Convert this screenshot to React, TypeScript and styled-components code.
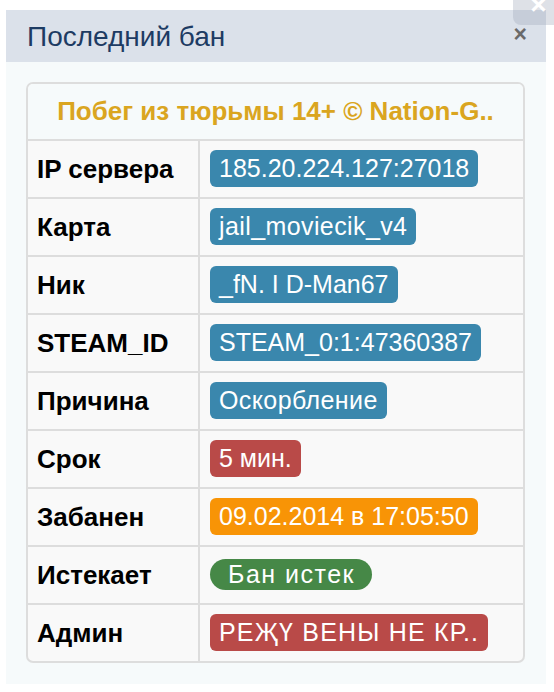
import React from "react";
import styled, { createGlobalStyle } from "styled-components";

const Global = createGlobalStyle`
  html, body { margin: 0; padding: 0; background: #ffffff; }
  body { font-family: "Liberation Sans", Arial, Helvetica, sans-serif; }
`;

const Page = styled.div`
  position: relative;
  width: 554px;
  height: 692px;
  padding: 10px 0 0 6px;
  box-sizing: border-box;
  overflow: hidden;
`;

const Modal = styled.div`
  width: 540px;
  height: 674px;
  display: flex;
  flex-direction: column;
  background: #f6fafb;
`;

const Header = styled.div`
  height: 52px;
  flex: none;
  display: flex;
  align-items: center;
  justify-content: space-between;
  padding: 0 19px 0 21px;
  background: #dbe1ea;
  box-sizing: border-box;
`;

const Title = styled.h3`
  margin: 0;
  font-size: 28px;
  font-weight: normal;
  color: #1d3b63;
  margin-top: 1px;
`;

const CloseX = styled.span`
  font-size: 23px;
  font-weight: bold;
  color: #6a6a6a;
  line-height: 1;
  margin-top: -3px;
`;

const OuterClose = styled.div`
  position: absolute;
  top: -12px;
  right: -10px;
  width: 51px;
  height: 37px;
  border-radius: 8px;
  background: rgba(160, 170, 185, 0.35);
  display: flex;
  align-items: flex-end;
  justify-content: center;
  padding-bottom: 6px;
  box-sizing: border-box;
  color: #ffffff;
  font-size: 28px;
  font-weight: bold;
  line-height: 1;
`;

const Body = styled.div`
  padding: 20px 21px 0 20px;
`;

const Card = styled.div`
  border: 2px solid #dddddd;
  border-radius: 7px;
  overflow: hidden;
  background: #f9f9f9;
`;

const CardTitle = styled.div`
  height: 55px;
  display: flex;
  align-items: center;
  justify-content: center;
  background: #f6fafb;
  color: #daa520;
  font-weight: bold;
  font-size: 26px;
  white-space: nowrap;
`;

const Row = styled.div`
  display: grid;
  grid-template-columns: 172px 1fr;
  height: 58px;
  border-top: 2px solid #dddddd;
  box-sizing: border-box;
`;

const Label = styled.div`
  display: flex;
  align-items: center;
  padding-left: 9px;
  border-right: 2px solid #dddddd;
  font-weight: bold;
  font-size: 26px;
  color: #000000;
  white-space: nowrap;
`;

const Value = styled.div`
  display: flex;
  align-items: center;
  padding-left: 10px;
  padding-bottom: 2px;
`;

const Badge = styled.span<{ $bg: string; $pill?: boolean; $track?: number }>`
  display: inline-flex;
  align-items: center;
  height: ${(p) => (p.$pill ? "31px" : "37px")};
  padding: ${(p) => (p.$pill ? "0 17px 0 18px" : "0 9px")};
  border-radius: ${(p) => (p.$pill ? "16px" : "6px")};
  background: ${(p) => p.$bg};
  color: #ffffff;
  font-size: 25px;
  letter-spacing: ${(p) => p.$track ?? 0}px;
  white-space: nowrap;
`;

const BLUE = "#3a87ad";
const RED = "#b94a48";
const ORANGE = "#f89406";
const GREEN = "#468847";

const rows: { label: string; value: string; bg: string; pill?: boolean; track?: number }[] = [
  { label: "IP сервера", value: "185.20.224.127:27018", bg: BLUE },
  { label: "Карта", value: "jail_moviecik_v4", bg: BLUE, track: 0.4 },
  { label: "Ник", value: "_fN. I D-Man67", bg: BLUE },
  { label: "STEAM_ID", value: "STEAM_0:1:47360387", bg: BLUE },
  { label: "Причина", value: "Оскорбление", bg: BLUE, track: 0.4 },
  { label: "Срок", value: "5 мин.", bg: RED },
  { label: "Забанен", value: "09.02.2014 в 17:05:50", bg: ORANGE },
  { label: "Истекает", value: "Бан истек", bg: GREEN, pill: true, track: 1.5 },
  { label: "Админ", value: "РЕҖҮ ВЕНЫ НЕ КР..", bg: RED, track: 1.2 },
];

export default function App() {
  return (
    <>
      <Global />
      <Page>
        <Modal>
          <Header>
            <Title>Последний бан</Title>
            <CloseX>×</CloseX>
          </Header>
          <Body>
            <Card>
              <CardTitle>Побег из тюрьмы 14+ © Nation-G..</CardTitle>
              {rows.map((r) => (
                <Row key={r.label}>
                  <Label>{r.label}</Label>
                  <Value>
                    <Badge $bg={r.bg} $pill={r.pill} $track={r.track}>
                      {r.value}
                    </Badge>
                  </Value>
                </Row>
              ))}
            </Card>
          </Body>
        </Modal>
        <OuterClose>×</OuterClose>
      </Page>
    </>
  );
}
